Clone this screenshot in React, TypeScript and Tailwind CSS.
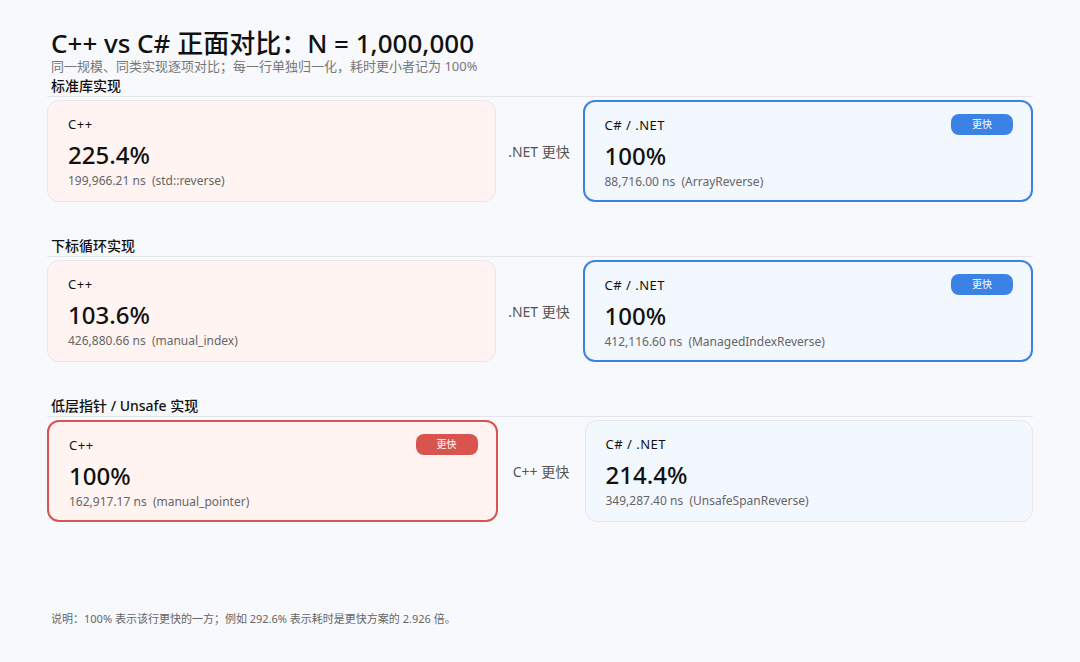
const rows = [
  {
    title: "标准库实现",
    verdict: ".NET 更快",
    cpp: { pct: "225.4%", ns: "199,966.21 ns", name: "std::reverse", win: false },
    cs: { pct: "100%", ns: "88,716.00 ns", name: "ArrayReverse", win: true },
  },
  {
    title: "下标循环实现",
    verdict: ".NET 更快",
    cpp: { pct: "103.6%", ns: "426,880.66 ns", name: "manual_index", win: false },
    cs: { pct: "100%", ns: "412,116.60 ns", name: "ManagedIndexReverse", win: true },
  },
  {
    title: "低层指针 / Unsafe 实现",
    verdict: "C++ 更快",
    cpp: { pct: "100%", ns: "162,917.17 ns", name: "manual_pointer", win: true },
    cs: { pct: "214.4%", ns: "349,287.40 ns", name: "UnsafeSpanReverse", win: false },
  },
];

type Cell = { pct: string; ns: string; name: string; win: boolean };

function Card({ label, cell, cpp }: { label: string; cell: Cell; cpp: boolean }) {
  const base = cpp ? "bg-[#fff4f2]" : "bg-[#f3f7fe]";
  const border = cell.win
    ? cpp
      ? "border-2 border-[#d9534f]"
      : "border-2 border-[#3b82e6]"
    : "border border-[#e6e8ec]";
  return (
    <div className={`relative flex-1 h-[102px] rounded-xl ${base} ${border} px-5 pt-[13px]`}>
      {cell.win && (
        <span
          className={`absolute right-[18px] top-[12px] w-[62px] h-[21px] rounded-lg text-[10px] text-white flex items-center justify-center ${
            cpp ? "bg-[#d9534f]" : "bg-[#3b82e6]"
          }`}
        >
          更快
        </span>
      )}
      <div className="text-[13px] text-[#111] leading-5 tracking-[0.5px]">{label}</div>
      <div className="text-[24px] font-medium text-[#111] leading-8 mt-[5px]">{cell.pct}</div>
      <div className="text-[12px] text-[#666] leading-4 mt-[2px]">
        {cell.ns}&nbsp;&nbsp;({cell.name})
      </div>
    </div>
  );
}

export default function App() {
  return (
    <div
      className="w-[1080px] h-[662px] bg-[#f8f9fc] pl-[47px] pr-[47px] pt-[25px] relative"
      style={{ fontFamily: '"Noto Sans", "Noto Sans CJK SC", sans-serif' }}
    >
      <h1 className="text-[26px] font-medium text-[#111] leading-9 pl-[4px]">C++ vs C# 正面对比：N = 1,000,000</h1>
      <p className="text-[13px] text-[#777] leading-4 pl-[4px] mt-[-3px]">
        同一规模、同类实现逐项对比；每一行单独归一化，耗时更小者记为 100%
      </p>
      {rows.map((r, i) => (
        <div key={i} className={i === 0 ? "mt-[2px]" : "mt-[34px]"}>
          <div className="text-[14px] font-medium text-[#111] leading-5 pl-[4px] border-b border-[#e3e5ea]">
            {r.title}
          </div>
          <div className="flex items-center mt-[3px]">
            <Card label="C++" cell={r.cpp} cpp />
            <div className="w-[87px] text-center text-[14px] text-[#555]">{r.verdict}</div>
            <Card label="C# / .NET" cell={r.cs} cpp={false} />
          </div>
        </div>
      ))}
      <p className="absolute left-[51px] top-[611px] text-[11px] text-[#666]">
        说明：100% 表示该行更快的一方；例如 292.6% 表示耗时是更快方案的 2.926 倍。
      </p>
    </div>
  );
}
